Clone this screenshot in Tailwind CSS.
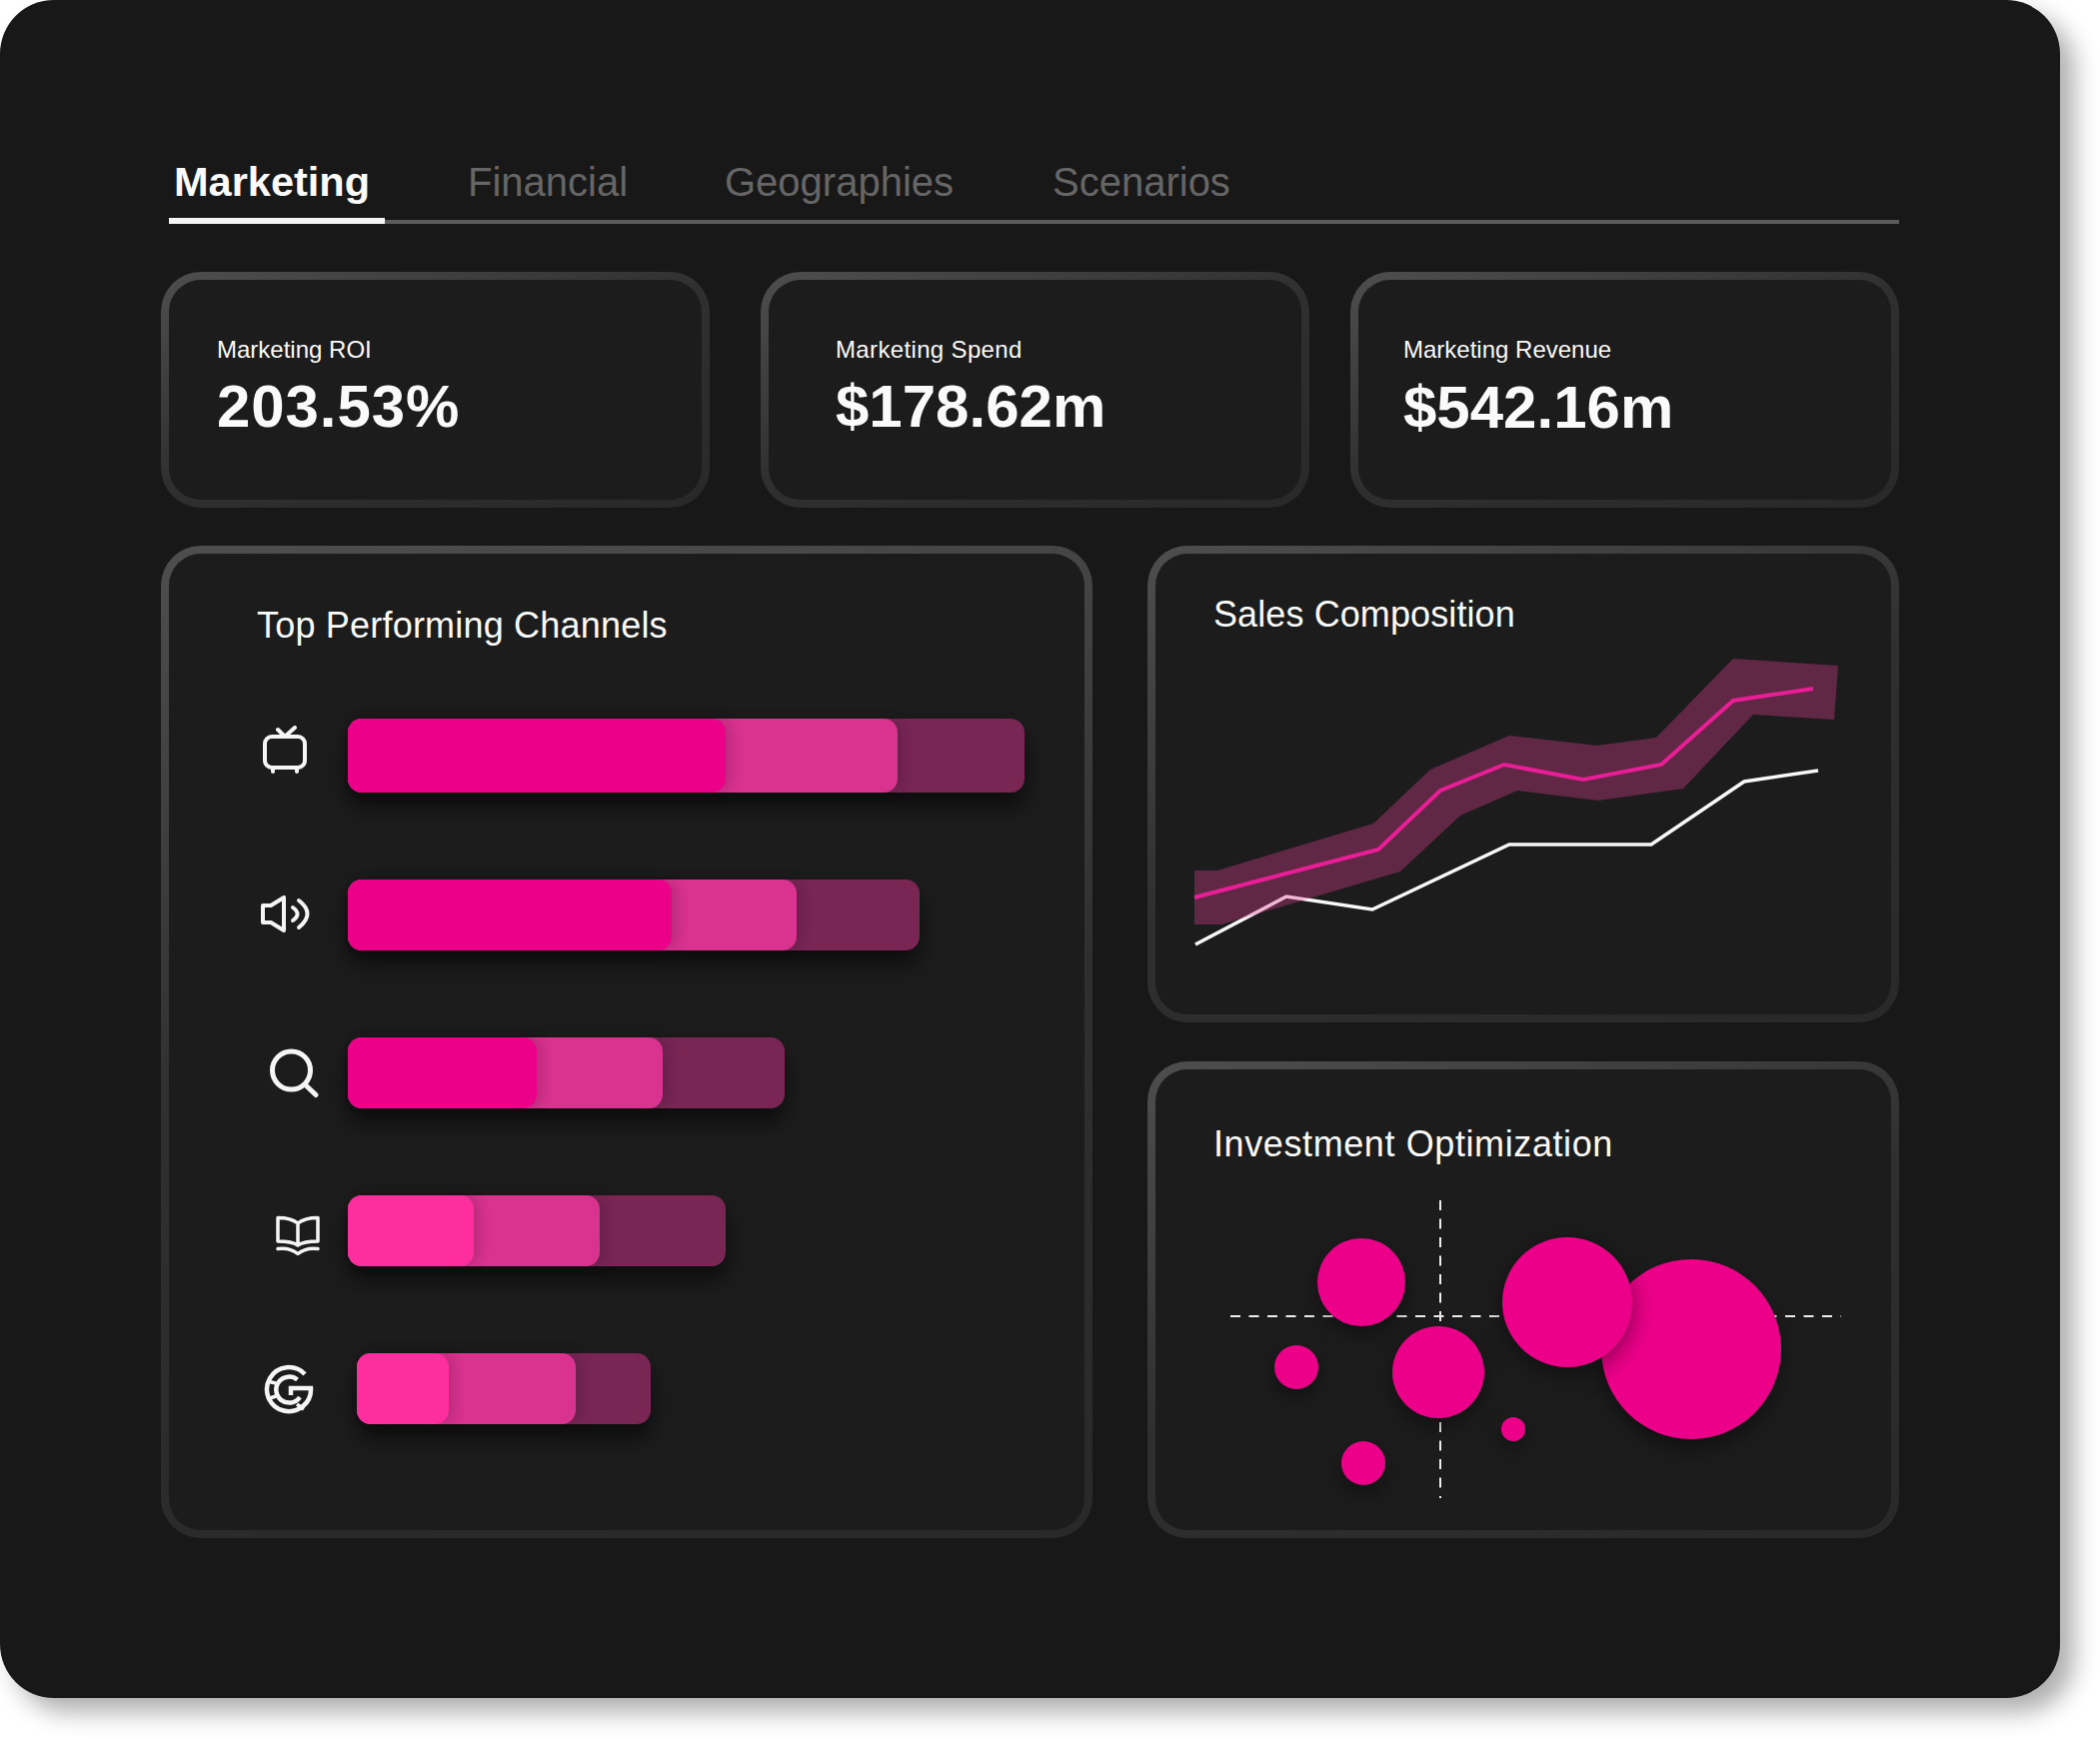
<!DOCTYPE html>
<html lang="en">
<head>
    <meta charset="UTF-8" />
    <title>Marketing Dashboard</title>
    <script src="https://cdn.jsdelivr.net/npm/@tailwindcss/browser@4"></script>
</head>
<body class="bg-white min-h-screen font-['Liberation_Sans',sans-serif] text-[#fafafa]">

    <!-- Panel -->
    <div class="w-[2061px] h-[1699px] bg-[#181818] rounded-[54px] shadow-[14px_14px_24px_rgba(0,0,0,0.32)] px-[161px] pt-[162px]">

        <!-- Tabs -->
        <div class="ml-2 flex h-[62px] text-[40px] leading-[40px] text-[#666666]">
            <div class="w-[216px] pl-[5px] border-b-[6px] border-[#f5f5f5] font-bold text-[41.5px] text-[#fafafa]">Marketing</div>
            <div class="flex-1 flex border-b-4 border-[#5c5c5c] pl-[83px]">
                <span class="w-[257px]">Financial</span>
                <span class="w-[328px]">Geographies</span>
                <span>Scenarios</span>
            </div>
        </div>

        <!-- Stat cards -->
        <div class="flex mt-12">
            <div class="w-[549px] h-[236px] p-2 rounded-[40px] bg-linear-[160deg] from-[#4e4e4e] via-[#2f2f2f] to-[#292929]">
                <div class="h-full rounded-[32px] bg-[#1c1c1c] pl-12 pt-[54px]">
                    <p class="text-2xl leading-8">Marketing ROI</p>
                    <p class="mt-[11px] text-[60px] leading-[60px] font-bold tracking-[0.9px]">203.53%</p>
                </div>
            </div>
            <div class="ml-[51px] w-[549px] h-[236px] p-2 rounded-[40px] bg-linear-[160deg] from-[#4e4e4e] via-[#2f2f2f] to-[#292929]">
                <div class="h-full rounded-[32px] bg-[#1c1c1c] pl-[67px] pt-[54px]">
                    <p class="text-2xl leading-8 tracking-[0.35px]">Marketing Spend</p>
                    <p class="mt-[11px] text-[60px] leading-[60px] font-bold">$178.62m</p>
                </div>
            </div>
            <div class="ml-[41px] w-[549px] h-[236px] p-2 rounded-[40px] bg-linear-[160deg] from-[#4e4e4e] via-[#2f2f2f] to-[#292929]">
                <div class="h-full rounded-[32px] bg-[#1c1c1c] pl-[45px] pt-[54px]">
                    <p class="text-2xl leading-8">Marketing Revenue</p>
                    <p class="mt-3 text-[60px] leading-[60px] font-bold">$542.16m</p>
                </div>
            </div>
        </div>

        <div class="flex mt-[38px]">

            <!-- Top Performing Channels -->
            <div class="w-[932px] h-[993px] p-2 rounded-[40px] bg-linear-[170deg] from-[#4e4e4e] via-[#2f2f2f] to-[#292929]">
                <div class="h-full rounded-[32px] bg-[#1c1c1c] pt-[52px]">
                    <h2 class="pl-[88px] text-4xl leading-10 tracking-[0.2px]">Top Performing Channels</h2>

                    <!-- TV -->
                    <div class="flex items-center mt-[73px]">
                        <div class="w-[179px] pl-[94px] -mt-3">
                            <svg class="w-[44px] h-[48px]" viewBox="0 0 44 48" fill="none" stroke="#f5f5f5" stroke-width="4" stroke-linecap="round" stroke-linejoin="round">
                                <rect x="2" y="11" width="40" height="31" rx="7" />
                                <path d="M15 4l7 7 10-9M10 43v3M34 43v3" />
                            </svg>
                        </div>
                        <div class="w-[677px] h-[74px] rounded-[14px] bg-[#792655] shadow-[0_14px_22px_rgba(0,0,0,0.55)]">
                            <div class="w-[550px] h-full rounded-[14px] bg-[#d9328f] shadow-[6px_0_12px_rgba(0,0,0,0.14)]">
                                <div class="w-[378px] h-full rounded-[14px] bg-[#ed0089] shadow-[6px_0_12px_rgba(0,0,0,0.14)]"></div>
                            </div>
                        </div>
                    </div>

                    <!-- Audio -->
                    <div class="flex items-center mt-[87px]">
                        <div class="w-[179px] pl-[92px] -mt-0.5">
                            <svg class="w-[49px] h-[37px]" viewBox="0 0 49 37" fill="none" stroke="#f5f5f5" stroke-width="4" stroke-linecap="round" stroke-linejoin="round">
                                <path d="M2 10h8L23 2v33L10 27H2z" />
                                <path d="M32 12q9 6.500 0 13M38 5q17 13 0 27" />
                            </svg>
                        </div>
                        <div class="w-[572px] h-[71px] rounded-[14px] bg-[#792655] shadow-[0_14px_22px_rgba(0,0,0,0.55)]">
                            <div class="w-[449px] h-full rounded-[14px] bg-[#d9328f] shadow-[6px_0_12px_rgba(0,0,0,0.14)]">
                                <div class="w-[324px] h-full rounded-[14px] bg-[#ed0089] shadow-[6px_0_12px_rgba(0,0,0,0.14)]"></div>
                            </div>
                        </div>
                    </div>

                    <!-- Search -->
                    <div class="flex items-center mt-[87px]">
                        <div class="w-[179px] pl-[100px]">
                            <svg class="w-[50px] h-[50px]" viewBox="0 0 50 50" fill="none" stroke="#f5f5f5" stroke-width="5" stroke-linecap="round">
                                <circle cx="22.500" cy="22" r="19" />
                                <path d="M37 37l10 9.500" />
                            </svg>
                        </div>
                        <div class="w-[437px] h-[71px] rounded-[14px] bg-[#792655] shadow-[0_14px_22px_rgba(0,0,0,0.55)]">
                            <div class="w-[315px] h-full rounded-[14px] bg-[#d9328f] shadow-[6px_0_12px_rgba(0,0,0,0.14)]">
                                <div class="w-[189px] h-full rounded-[14px] bg-[#ed0089] shadow-[6px_0_12px_rgba(0,0,0,0.14)]"></div>
                            </div>
                        </div>
                    </div>

                    <!-- Print -->
                    <div class="flex items-center mt-[87px]">
                        <div class="w-[179px] pl-[107px] mt-2.5">
                            <svg class="w-[44px] h-[41px]" viewBox="0 0 44 41" fill="none" stroke="#f5f5f5" stroke-width="3.500" stroke-linecap="round" stroke-linejoin="round">
                                <path d="M2 2.500c8 0 15 1.500 20 5.500 5-4 12-5.500 20-5.500V26c-8 0-15 .5-20 4-5-3.500-12-4-20-4zM22 8v22" />
                                <path d="M2 33.500c8-1 15 1 20 5 5-4 12-6 20-5" />
                            </svg>
                        </div>
                        <div class="w-[378px] h-[71px] rounded-[14px] bg-[#792655] shadow-[0_14px_22px_rgba(0,0,0,0.55)]">
                            <div class="w-[252px] h-full rounded-[14px] bg-[#d9328f] shadow-[6px_0_12px_rgba(0,0,0,0.14)]">
                                <div class="w-[126px] h-full rounded-[14px] bg-[#ff2e9f] shadow-[6px_0_12px_rgba(0,0,0,0.14)]"></div>
                            </div>
                        </div>
                    </div>

                    <!-- Google -->
                    <div class="flex items-center mt-[87px]">
                        <div class="w-[188px] pl-[95px]">
                            <svg class="w-[50px] h-[50px]" viewBox="10 10 50 50" fill="none" stroke="#f5f5f5" stroke-width="4.500">
                                <path d="M51 20A22 22 0 1 0 57 34H37v7" />
                                <path d="M43.500 25.500A13 13 0 1 0 46 43" />
                                <path d="M13 27l9 2M13 45l9-3M43 50l7 5" stroke-width="3.500" />
                            </svg>
                        </div>
                        <div class="w-[294px] h-[71px] rounded-[14px] bg-[#792655] shadow-[0_14px_22px_rgba(0,0,0,0.55)]">
                            <div class="w-[219px] h-full rounded-[14px] bg-[#d9328f] shadow-[6px_0_12px_rgba(0,0,0,0.14)]">
                                <div class="w-[92px] h-full rounded-[14px] bg-[#ff2e9f] shadow-[6px_0_12px_rgba(0,0,0,0.14)]"></div>
                            </div>
                        </div>
                    </div>
                </div>
            </div>

            <div class="ml-[55px] w-[752px]">

                <!-- Sales Composition -->
                <div class="h-[477px] p-2 rounded-[40px] bg-linear-[160deg] from-[#4e4e4e] via-[#2f2f2f] to-[#292929]">
                    <div class="h-full rounded-[32px] bg-[#1c1c1c] pt-[41px]">
                        <h2 class="pl-[58px] text-4xl leading-10 tracking-[0.1px]">Sales Composition</h2>
                        <svg class="-mt-px w-[736px] h-[381px]" viewBox="1156 634 736 381" fill="none">
                            <polyline stroke="#f8f8f8" stroke-width="3.500" points="1196,945 1287,897 1373,910 1510,845 1652,845 1745,782 1819,771" />
                            <polygon fill="#e03f8f" fill-opacity="0.35" points="1195,871 1218,871 1374,824 1431,770 1510,736 1598,746 1657,738 1734,659 1839,666 1835,720 1754,715 1684,789 1599,801 1518,791 1461,816 1401,872 1222,925 1195,925" />
                            <polyline stroke="#e91e96" stroke-width="4" points="1195,898 1379,850 1441,791 1505,765 1584,780 1662,765 1734,701 1814,689" />
                        </svg>
                    </div>
                </div>

                <!-- Investment Optimization -->
                <div class="mt-[39px] h-[477px] p-2 rounded-[40px] bg-linear-[160deg] from-[#4e4e4e] via-[#2f2f2f] to-[#292929]">
                    <div class="h-full rounded-[32px] bg-[#1c1c1c] pt-[55px]">
                        <h2 class="pl-[58px] text-4xl leading-10 tracking-[0.6px]">Investment Optimization</h2>
                        <svg class="-mt-px w-[736px] h-[367px]" viewBox="1156 1164 736 367" fill="#ed0089">
                            <path d="M1231 1317H1842M1441 1201V1499" stroke="#ededed" stroke-width="2" stroke-dasharray="10 8.500" fill="none" />
                            <circle class="drop-shadow-[0_10px_10px_rgba(0,0,0,0.4)]" cx="1692" cy="1350" r="90" />
                            <circle class="drop-shadow-[0_6px_12px_rgba(0,0,0,0.45)]" cx="1568" cy="1303" r="65" />
                            <circle class="drop-shadow-[0_8px_10px_rgba(0,0,0,0.4)]" cx="1362" cy="1283" r="44" />
                            <circle class="drop-shadow-[0_8px_10px_rgba(0,0,0,0.4)]" cx="1439" cy="1373" r="46" />
                            <circle class="drop-shadow-[0_8px_10px_rgba(0,0,0,0.4)]" cx="1297" cy="1368" r="22" />
                            <circle class="drop-shadow-[0_8px_10px_rgba(0,0,0,0.4)]" cx="1514" cy="1430" r="12" />
                            <circle class="drop-shadow-[0_8px_10px_rgba(0,0,0,0.4)]" cx="1364" cy="1464" r="22" />
                        </svg>
                    </div>
                </div>
            </div>
        </div>
    </div>

</body>
</html>
